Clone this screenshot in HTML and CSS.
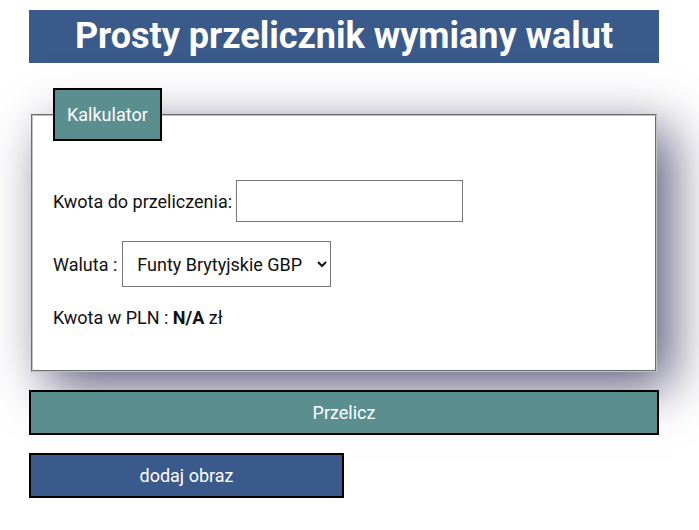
FILE: index.html
```html
<!DOCTYPE html>
<html lang="pl">
<head>
<meta charset="utf-8">
<title>Prosty przelicznik wymiany walut</title>
<link rel="stylesheet" href="styles.css">
</head>
<body>
<div class="page">
  <h1 class="title">Prosty przelicznik wymiany walut</h1>
  <fieldset class="calc">
    <legend class="calc-legend">Kalkulator</legend>
    <div class="row row-amount">
      <label class="label" for="kwota">Kwota do przeliczenia:</label> <input class="amount" id="kwota" type="text">
    </div>
    <div class="row row-currency">
      <label class="label" for="waluta">Waluta :</label> <select class="currency" id="waluta">
        <option>Funty Brytyjskie GBP</option>
        <option>Euro EUR</option>
        <option>Dolary USD</option>
      </select>
    </div>
    <p class="result">Kwota w PLN : <b>N/A</b> zł</p>
  </fieldset>
  <button class="btn btn-calc" type="button">Przelicz</button>
  <button class="btn btn-image" type="button">dodaj obraz</button>
</div>
</body>
</html>
```
FILE: styles.css
```css
html, body {
  margin: 0;
  padding: 0;
  background: #ffffff;
}

body {
  font-family: Roboto, "Liberation Sans", sans-serif;
  font-size: 18px;
  color: #111;
}

.page {
  width: 630px;
  margin-left: 29px;
  padding-top: 10px;
  display: flex;
  flex-direction: column;
  align-items: flex-start;
}

.title {
  align-self: stretch;
  margin: 0;
  height: 53px;
  line-height: 53px;
  background: #3a5a8c;
  color: #ffffff;
  font-size: 36px;
  font-weight: 700;
  text-align: center;
}

.calc {
  align-self: stretch;
  margin: 25px 2px 0;
  padding: 0 20px 42px;
  border: 2px groove #c0c0c0;
  background: #ffffff;
  box-shadow: 15px 15px 50px rgb(95, 92, 125);
}

.calc-legend {
  padding: 14px 12px;
  border: 2px solid #000;
  background: #5b8f8f;
  color: #ffffff;
  font-size: 18px;
  line-height: 21px;
}

.row {
  display: block;
}

.row-amount {
  margin-top: 39px;
  height: 42px;
  display: flex;
  align-items: center;
}

.row-currency {
  margin-top: 19px;
  height: 46px;
  display: flex;
  align-items: center;
}

.label {
  margin-right: 4px;
}

.amount {
  box-sizing: border-box;
  width: 227px;
  height: 42px;
  border: 1px solid #767676;
  border-radius: 0;
  padding: 0 8px;
  font: inherit;
}

.currency {
  box-sizing: border-box;
  width: 209px;
  height: 46px;
  margin-left: 1px;
  border: 1px solid #767676;
  border-radius: 0;
  padding: 0 8px 0 10px;
  background: #ffffff;
  font: inherit;
  color: #111;
}

.result {
  margin: 20px 0 0;
  line-height: 21px;
}

.btn {
  box-sizing: border-box;
  border: 2px solid #000;
  color: #ffffff;
  font-family: Roboto, "Liberation Sans", sans-serif;
  font-size: 18px;
  cursor: pointer;
  border-radius: 0;
}

.btn-calc {
  align-self: stretch;
  margin-top: 18px;
  height: 45px;
  background: #5b8f8f;
}

.btn-image {
  width: 315px;
  margin-top: 18px;
  height: 45px;
  background: #3a5a8c;
}
```
